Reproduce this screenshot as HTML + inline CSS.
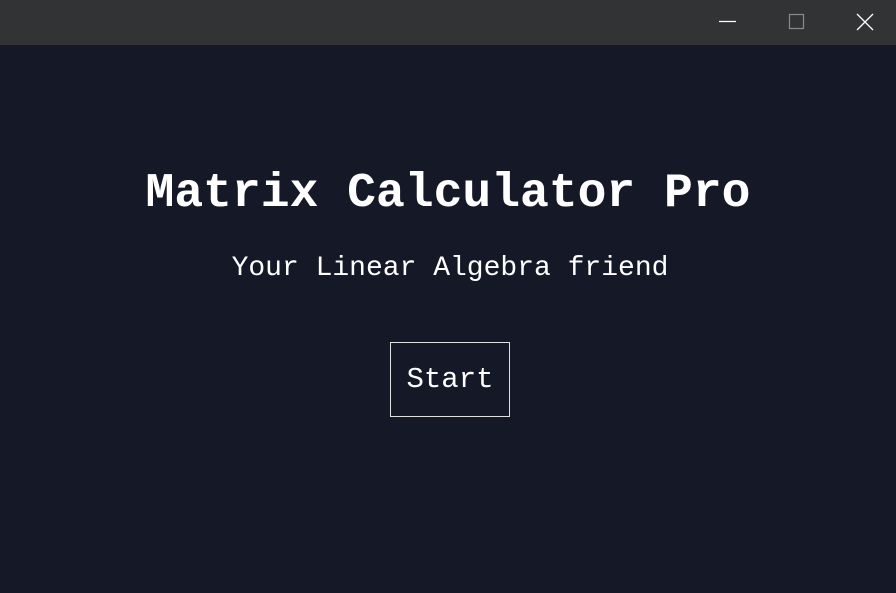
<!DOCTYPE html>
<html><head><style>
html,body{margin:0;padding:0;width:896px;height:593px;overflow:hidden;background:#151827;font-family:"Liberation Mono",monospace;color:#fff}
.bar{position:absolute;left:0;top:0;width:896px;height:45px;background:#323335}
.t{position:absolute;left:0;width:896px;text-align:center;line-height:1;white-space:pre}
.btn{position:absolute;left:390px;top:342px;width:118px;height:73px;border:1px solid #e0e0e0}
</style></head><body>
<div class="bar">
<svg width="896" height="45" style="position:absolute;left:0;top:0">
<line x1="719" y1="21.5" x2="736" y2="21.5" stroke="#fff" stroke-width="1.3"/>
<rect x="789.5" y="14.5" width="14" height="14" fill="none" stroke="#8a8a8a" stroke-width="1.2"/>
<path d="M857 14 L873 30 M873 14 L857 30" stroke="#fff" stroke-width="1.3"/>
</svg>
</div>
<div class="t" style="top:170px;font-size:48px;font-weight:bold">Matrix Calculator Pro</div>
<div class="t" style="top:255px;font-size:28px;left:2px">Your Linear Algebra friend</div>
<div class="btn"></div>
<div class="t" style="top:365px;font-size:29px;left:0;width:900px">Start</div>
</body></html>
